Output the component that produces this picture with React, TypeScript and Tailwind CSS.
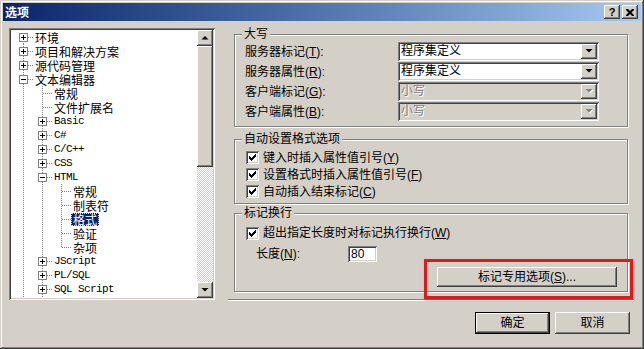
import React from 'react';

type Row = { t: string; l: number; box?: '+' | '-'; first?: boolean; last?: boolean; sel?: boolean; en?: boolean };

const rows: Row[] = [
  { t: '环境', l: 0, box: '+', first: true },
  { t: '项目和解决方案', l: 0, box: '+' },
  { t: '源代码管理', l: 0, box: '+' },
  { t: '文本编辑器', l: 0, box: '-' },
  { t: '常规', l: 1 },
  { t: '文件扩展名', l: 1 },
  { t: 'Basic', l: 1, box: '+', en: true },
  { t: 'C#', l: 1, box: '+', en: true },
  { t: 'C/C++', l: 1, box: '+', en: true },
  { t: 'CSS', l: 1, box: '+', en: true },
  { t: 'HTML', l: 1, box: '-', en: true },
  { t: '常规', l: 2 },
  { t: '制表符', l: 2 },
  { t: '格式', l: 2, sel: true },
  { t: '验证', l: 2 },
  { t: '杂项', l: 2, last: true },
  { t: 'JScript', l: 1, box: '+', en: true },
  { t: 'PL/SQL', l: 1, box: '+', en: true },
  { t: 'SQL Script', l: 1, box: '+', en: true },
  { t: 'T-SQL', l: 1, box: '+', en: true },
];

const raised = 'shadow-[inset_-1px_-1px_#404040,inset_1px_1px_#ffffff,inset_-2px_-2px_#808080,inset_2px_2px_#d4d0c8]';
const sunken = 'shadow-[inset_1px_1px_#808080,inset_-1px_-1px_#ffffff,inset_2px_2px_#404040,inset_-2px_-2px_#d4d0c8]';
const etched = 'border border-[#808080] shadow-[inset_1px_1px_#ffffff,1px_1px_#ffffff]';

function TreeLines({ r }: { r: Row }) {
  const w = 22 + 19 * r.l;
  const c = 12 + 19 * r.l;
  const guides = [];
  for (let a = 0; a < r.l; a++) {
    const x = 12 + 19 * a + 0.5;
    guides.push(<line key={a} x1={x} y1={0} x2={x} y2={14} />);
  }
  return (
    <svg width={w} height={14} className="shrink-0">
      <g stroke="#808080" strokeDasharray="1 1">
        {guides}
        <line x1={c + 0.5} y1={r.first ? 7 : 0} x2={c + 0.5} y2={r.last ? 8 : 14} />
        <line x1={c + 1} y1={7.5} x2={c + 10} y2={7.5} />
      </g>
      {r.box && (
        <g>
          <rect x={c - 3.5} y={3.5} width={8} height={8} fill="#ffffff" stroke="#808080" />
          <line x1={c - 2} y1={7.5} x2={c + 3} y2={7.5} stroke="#000" />
          {r.box === '+' && <line x1={c + 0.5} y1={5} x2={c + 0.5} y2={10} stroke="#000" />}
        </g>
      )}
    </svg>
  );
}

function Arrow({ up, disabled }: { up?: boolean; disabled?: boolean }) {
  const d = up ? 'M4 0L7.5 3.5H0.5Z' : 'M0.5 0H7.5L4 3.5Z';
  return (
    <svg width={9} height={5}>
      {disabled && <path d={d} transform="translate(1 1)" fill="#ffffff" />}
      <path d={d} fill={disabled ? '#808080' : '#000000'} />
    </svg>
  );
}

function Select({ value, disabled }: { value: string; disabled?: boolean }) {
  return (
    <div className={`w-[201px] h-[19px] p-[2px] flex ${sunken} ${disabled ? 'bg-[#d4d0c8]' : 'bg-white'}`}>
      <span className={`flex-1 pl-[1px] leading-[15px] ${disabled ? 'text-[#808080] [text-shadow:1px_1px_#ffffff]' : ''}`}>{value}</span>
      <div className={`w-[16px] h-[15px] bg-[#d4d0c8] flex items-center justify-center ${raised}`}>
        <Arrow disabled={disabled} />
      </div>
    </div>
  );
}

function Check() {
  return (
    <div className={`w-[13px] h-[13px] bg-white shrink-0 ${sunken}`}>
      <svg width={13} height={13}>
        <path
          d="M3 5h1v3h-1zM4 6h1v3h-1zM5 7h1v3h-1zM6 6h1v3h-1zM7 5h1v3h-1zM8 4h1v3h-1zM9 3h1v3h-1z"
          fill="#000"
        />
      </svg>
    </div>
  );
}

function Group({ title, className, children }: { title: string; className?: string; children: React.ReactNode }) {
  return (
    <div className={`${etched} ${className ?? ''}`}>
      <div className="-mt-[8px] ml-[7px] w-fit bg-[#d4d0c8] px-[2px] h-[14px] leading-[14px]">{title}</div>
      {children}
    </div>
  );
}

const Key = ({ k }: { k: string }) => (
  <span>
    (<u>{k}</u>)
  </span>
);

export default function App() {
  const selectRows = [
    { label: '服务器标记', k: 'T', value: '程序集定义' },
    { label: '服务器属性', k: 'R', value: '程序集定义' },
    { label: '客户端标记', k: 'G', value: '小写', disabled: true },
    { label: '客户端属性', k: 'B', value: '小写', disabled: true },
  ];
  const checks = [
    { label: '键入时插入属性值引号', k: 'Y' },
    { label: '设置格式时插入属性值引号', k: 'F' },
    { label: '自动插入结束标记', k: 'C' },
  ];

  return (
    <div className="relative w-[644px] h-[349px] overflow-hidden bg-[#d4d0c8] p-[3px] flex flex-col text-[12px] leading-[14px] text-black font-['Liberation_Sans','Noto_Sans_CJK_SC',sans-serif] shadow-[inset_-1px_-1px_#404040,inset_1px_1px_#d4d0c8,inset_-2px_-2px_#808080,inset_2px_2px_#ffffff]">
      {/* title bar */}
      <div className="h-[18px] flex items-center bg-linear-to-r from-[#0a246a] to-[#a6caf0] pl-[2px] pr-[3px]">
        <span className="text-white font-bold text-[12px] font-['Noto_Sans_CJK_SC',sans-serif]">选项</span>
        <div className="ml-auto flex gap-[2px]">
          <div className={`w-[16px] h-[14px] bg-[#d4d0c8] flex items-center justify-center text-[11px] font-bold leading-[14px] ${raised}`}>?</div>
          <div className={`w-[16px] h-[14px] bg-[#d4d0c8] flex items-center justify-center ${raised}`}>
            <svg width={8} height={7}>
              <path d="M0 0h2l2 2 2-2h2v1l-2.5 2.5L8 6v1H6L4 5 2 7H0V6l2.5-2.5L0 1z" fill="#000" />
            </svg>
          </div>
        </div>
      </div>

      <div className="flex h-[281px]">
        {/* tree */}
        <div className={`ml-[6px] mt-[7px] w-[206px] h-[272px] p-[2px] flex bg-white ${sunken}`}>
          <div className="flex-1 overflow-hidden bg-white">
            {rows.map((r, i) => (
              <div key={i} className="flex items-center h-[14px] overflow-hidden">
                <TreeLines r={r} />
                <span
                  className={`px-[2px] h-[13px] leading-[13px] whitespace-nowrap ${
                    r.en ? "font-['Liberation_Mono',monospace] text-[11px] tracking-[-0.6px]" : "font-['Noto_Sans_CJK_SC',sans-serif]"
                  } ${r.sel ? 'bg-[#0a246a] text-white outline-1 outline-dotted outline-[#f5db95] -outline-offset-1' : ''}`}
                >
                  {r.t}
                </span>
              </div>
            ))}
          </div>
          <div className="w-[16px] flex flex-col">
            <div className={`h-[16px] bg-[#d4d0c8] flex items-center justify-center ${raised}`}>
              <Arrow up />
            </div>
            <div className={`h-[121px] bg-[#d4d0c8] ${raised}`} />
            <div className="flex-1 bg-[image:repeating-conic-gradient(#d4d0c8_0_25%,#ffffff_0_50%)] bg-[length:2px_2px]" />
            <div className={`h-[16px] bg-[#d4d0c8] flex items-center justify-center ${raised}`}>
              <Arrow />
            </div>
          </div>
        </div>

        {/* options */}
        <div className="ml-[19px] w-[394px] flex flex-col">
          <Group title="大写" className="mt-[13px] pb-[5px]">
            <div className="mt-[1px] flex flex-col gap-[1px]">
              {selectRows.map((s) => (
                <div key={s.label} className="flex items-center h-[19px] pl-[10px]">
                  <span className="w-[153px]">
                    {s.label}
                    <Key k={s.k} />:
                  </span>
                  <Select value={s.value} disabled={s.disabled} />
                </div>
              ))}
            </div>
          </Group>

          <Group title="自动设置格式选项" className="mt-[12px] pb-[3px]">
            <div className="mt-[3px] flex flex-col">
              {checks.map((c) => (
                <div key={c.k} className="flex items-center gap-[4px] h-[17px] pl-[11px]">
                  <Check />
                  <span>
                    {c.label}
                    <Key k={c.k} />
                  </span>
                </div>
              ))}
            </div>
          </Group>

          <Group title="标记换行" className="mt-[9px] pb-[4px]">
            <div className="mt-[5px] flex items-center gap-[4px] h-[16px] pl-[11px]">
              <Check />
              <span>
                超出指定长度时对标记执行换行
                <Key k="W" />
              </span>
            </div>
            <div className="mt-[5px] flex items-center h-[16px] pl-[21px]">
              <span className="w-[92px]">
                长度
                <Key k="N" />:
              </span>
              <div className={`w-[29px] h-[16px] bg-white pl-[3px] leading-[16px] ${sunken}`}>80</div>
            </div>
            <div className="mt-[5px] flex justify-end pr-[10px]">
              <div className={`w-[180px] h-[20px] flex items-center justify-center bg-[#d4d0c8] ${raised}`}>
                <span>
                  标记专用选项
                  <Key k="S" />
                  ...
                </span>
              </div>
            </div>
          </Group>

          <div className="mt-[7px] -ml-[6px] w-[406px] h-[2px] border-t border-b border-t-[#808080] border-b-white" />
        </div>
      </div>

      {/* dialog buttons */}
      <div className="mt-[10px] flex justify-end gap-[5px] pr-[11px]">
        <div className="w-[75px] h-[22px] border border-black">
          <div className={`w-full h-full flex items-center justify-center bg-[#d4d0c8] ${raised}`}>确定</div>
        </div>
        <div className={`w-[75px] h-[22px] flex items-center justify-center bg-[#d4d0c8] ${raised}`}>取消</div>
      </div>

      {/* red annotation */}
      <div className="absolute left-[424px] top-[259px] w-[209px] h-[40px] border-[3px] border-[#d91c1c] shadow-[1px_1px_2px_rgba(0,0,0,0.3)]" />
    </div>
  );
}
